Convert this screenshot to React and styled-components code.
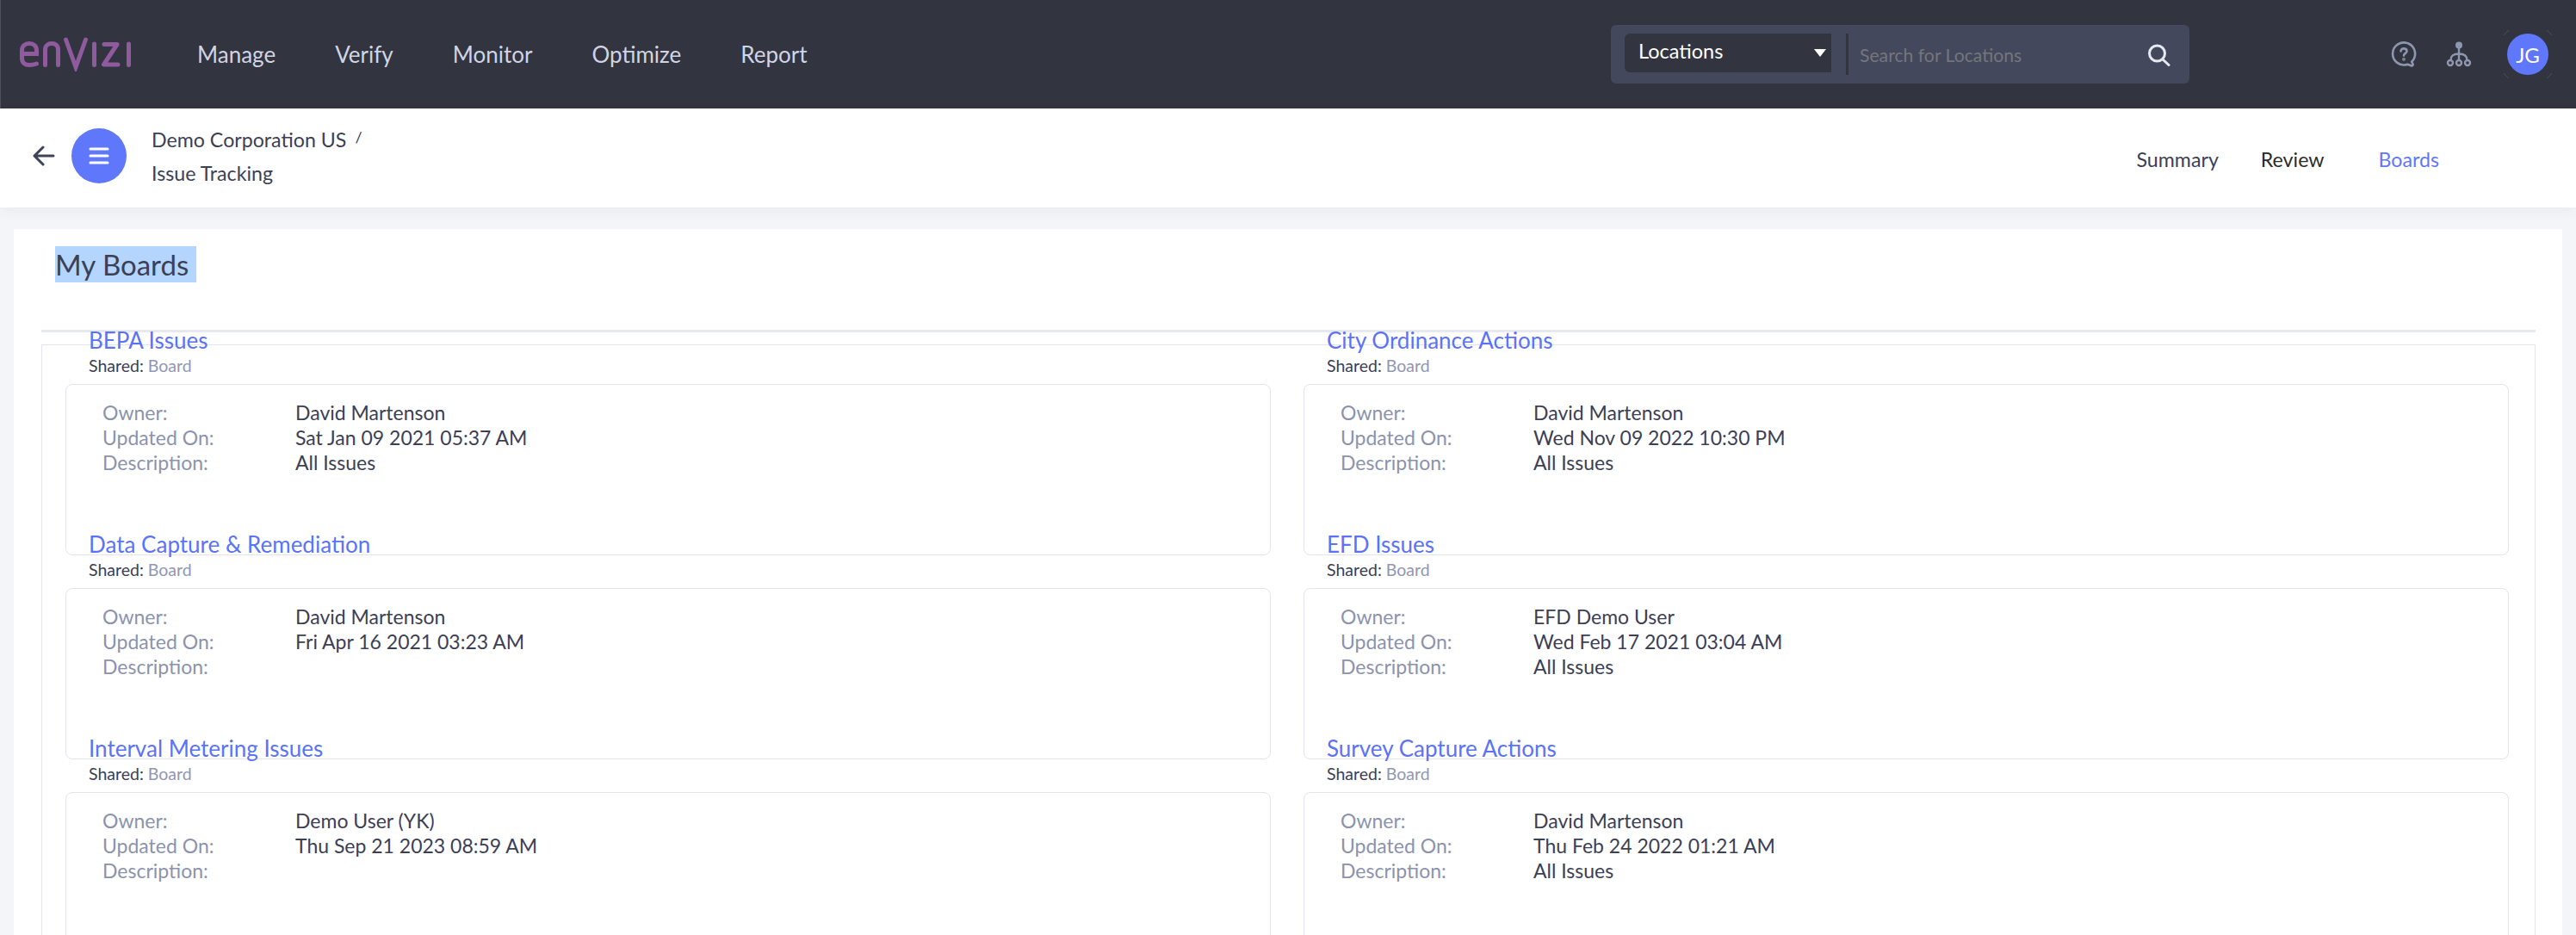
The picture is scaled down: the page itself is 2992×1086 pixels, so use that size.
import styled, { createGlobalStyle } from "styled-components";

const GlobalStyle = createGlobalStyle`
    html, body {
        margin: 0;
        padding: 0;
        height: 100%;
        background: #F4F5F8;
    }

    * {
        box-sizing: border-box;
    }
`;

const NAV_ITEMS = ["Manage", "Verify", "Monitor", "Optimize", "Report"];

const BOARDS = [
    { title: "BEPA Issues", owner: "David Martenson", updated: "Sat Jan 09 2021 05:37 AM", description: "All Issues" },
    { title: "City Ordinance Actions", owner: "David Martenson", updated: "Wed Nov 09 2022 10:30 PM", description: "All Issues" },
    { title: "Data Capture & Remediation", owner: "David Martenson", updated: "Fri Apr 16 2021 03:23 AM", description: "" },
    { title: "EFD Issues", owner: "EFD Demo User", updated: "Wed Feb 17 2021 03:04 AM", description: "All Issues" },
    { title: "Interval Metering Issues", owner: "Demo User (YK)", updated: "Thu Sep 21 2023 08:59 AM", description: "" },
    { title: "Survey Capture Actions", owner: "David Martenson", updated: "Thu Feb 24 2022 01:21 AM", description: "All Issues" },
];

function Logo() {
    return (
        <LogoSvg viewBox="0 0 129 40" fill="none" stroke="#8F5A9E" strokeWidth="5" strokeLinecap="round">
            <path d="M2.5 19.5H19.5V15.5C19.5 10.5 16 7.5 11 7.5C6 7.5 2.5 10.5 2.5 15.5V24.5C2.5 30 6 32.5 11 32.5C14 32.5 17 32 19.5 31" />
            <path d="M29.5 32.5V14.5C29.5 10 33 7.5 37 7.5C41.5 7.5 44.5 10 44.5 14.5V32.5" />
            <path d="M53.5 3L65 35L76.5 3" strokeLinejoin="miter" strokeMiterlimit="8" />
            <path d="M86.5 8V32.5" />
            <path d="M98 8.5H113L97.5 32H114" strokeLinejoin="round" />
            <path d="M126.5 8V32.5" />
        </LogoSvg>
    );
}

function HelpIcon() {
    return (
        <svg width="30" height="30" viewBox="0 0 30 30" fill="none" stroke="#8E97AE" strokeWidth="2.6" strokeLinecap="round" strokeLinejoin="round">
            <path d="M19.4 26.7A13 13 0 1 1 24.2 23.7L25.5 26.5C26 28 25 28.7 23.5 28.2Z" />
            <path d="M11.5 11.5C11.5 9.5 13 8.4 15 8.4C17 8.4 18.5 9.6 18.5 11.4C18.5 13.8 15 14 15 16.6" />
            <circle cx="15" cy="20.8" r="0.6" fill="#8E97AE" />
        </svg>
    );
}

function OrgIcon() {
    return (
        <svg width="30" height="30" viewBox="0 0 30 30" fill="none" stroke="#8E97AE" strokeWidth="2.4">
            <circle cx="15" cy="4.5" r="4" fill="#8E97AE" stroke="none" />
            <path d="M15 8V22M15 14.5C8 14.5 5.5 17 5.5 22M15 14.5C22 14.5 24.5 17 24.5 22" />
            <circle cx="5" cy="25" r="3" />
            <circle cx="15" cy="25" r="3" />
            <circle cx="25" cy="25" r="3" />
        </svg>
    );
}

function SearchIcon() {
    return (
        <SearchSvg viewBox="0 0 28 26" fill="none" stroke="#E6E8F2" strokeWidth="3" strokeLinecap="round">
            <circle cx="11.5" cy="11" r="9" />
            <path d="M18 18L25 24.5" />
        </SearchSvg>
    );
}

function BackArrow() {
    return (
        <BackSvg viewBox="0 0 26 24" fill="none" stroke="#3E435A" strokeWidth="3" strokeLinecap="round" strokeLinejoin="round">
            <path d="M24 12H2.5M12 2L2 12L12 22" />
        </BackSvg>
    );
}

function MenuIcon() {
    return (
        <svg width="24" height="20" viewBox="0 0 24 20" fill="none" stroke="#FFFFFF" strokeWidth="3" strokeLinecap="round">
            <path d="M2 2H22M2 10H22M2 18H22" />
        </svg>
    );
}

function AvatarTicks() {
    return (
        <TicksSvg viewBox="0 0 70 70" fill="none" stroke="#4C4F5E" strokeWidth="1">
            <path d="M7 13A35 35 0 0 1 13 7" />
            <path d="M57 7A35 35 0 0 1 63 13" />
            <path d="M63 57A35 35 0 0 1 57 63" />
            <path d="M13 63A35 35 0 0 1 7 57" />
        </TicksSvg>
    );
}

function BoardItem({ board }) {
    return (
        <Item>
            <ItemTitle>{board.title}</ItemTitle>
            <Shared>Shared: <span>Board</span></Shared>
            <Card>
                <Label>Owner:</Label>
                <Value>{board.owner}</Value>
                <Label>Updated On:</Label>
                <Value>{board.updated}</Value>
                <Label>Description:</Label>
                <Value>{board.description}</Value>
            </Card>
        </Item>
    );
}

export default function App() {
    return (
        <Page>
            <GlobalStyle />
            <TopBar>
                <Logo />
                <Nav>
                    {NAV_ITEMS.map((item) => <NavItem key={item}>{item}</NavItem>)}
                </Nav>
                <SearchBox>
                    <LocationSelect>
                        <span>Locations</span>
                        <Caret />
                    </LocationSelect>
                    <SearchDivider />
                    <Placeholder>Search for Locations</Placeholder>
                    <SearchIcon />
                </SearchBox>
                <TopIcons>
                    <HelpIcon />
                    <OrgIcon />
                    <Avatar>
                        JG
                        <AvatarTicks />
                    </Avatar>
                </TopIcons>
            </TopBar>
            <SubBar>
                <BackArrow />
                <MenuButton><MenuIcon /></MenuButton>
                <Breadcrumb>
                    <Crumb>Demo Corporation US<Slash>/</Slash></Crumb>
                    <Crumb>Issue Tracking</Crumb>
                </Breadcrumb>
                <Tabs>
                    <Tab>Summary</Tab>
                    <Tab $dark>Review</Tab>
                    <Tab $active>Boards</Tab>
                </Tabs>
            </SubBar>
            <Main>
                <Panel>
                    <Heading><Selected>My Boards&nbsp;</Selected></Heading>
                    <Divider />
                    <BoardsBox>
                        <BoardsGrid>
                            {BOARDS.map((board) => <BoardItem key={board.title} board={board} />)}
                        </BoardsGrid>
                    </BoardsBox>
                </Panel>
            </Main>
        </Page>
    );
}

const Page = styled.div`
    height: 1086px;
    overflow: hidden;
    font-family: Lato, "Noto Sans", sans-serif;
    color: #3C4056;
`;

const TopBar = styled.header`
    height: 126px;
    background: #32343F;
    border-left: 1px solid #50525C;
    padding-left: 22px;

    display: flex;
    align-items: center;
`;

const LogoSvg = styled.svg`
    width: 129px;
    height: 40px;
    margin-right: 77px;
`;

const Nav = styled.nav`
    width: 1642px;
    gap: 69px;

    display: flex;
    align-items: center;
`;

const NavItem = styled.div`
    font-size: 26px;
    line-height: 34px;
    color: #D0D4E4;
`;

const SearchBox = styled.div`
    width: 672px;
    height: 68px;
    padding: 10px 21px 0 16px;
    border-radius: 6px;
    background: #43485C;

    display: flex;
    align-items: flex-start;
`;

const LocationSelect = styled.div`
    width: 240px;
    height: 45px;
    padding: 0 6px 6px 16px;
    border-radius: 6px 0 0 6px;
    background: #32343F;

    font-size: 23.5px;
    color: #FFFFFF;

    display: flex;
    align-items: center;
    justify-content: space-between;
`;

const Caret = styled.span`
    width: 0;
    height: 0;
    margin-top: 6px;
    border-left: 7px solid transparent;
    border-right: 7px solid transparent;
    border-top: 9px solid #FFFFFF;
`;

const SearchDivider = styled.div`
    width: 3px;
    height: 48px;
    margin-left: 17px;
    background: #32343F;
`;

const Placeholder = styled.div`
    flex: 1;
    margin-left: 13px;
    padding-top: 11px;
    font-size: 21.2px;
    line-height: 28px;
    color: #75767B;
`;

const SearchSvg = styled.svg`
    width: 28px;
    height: 26px;
    margin-top: 12px;
`;

const TopIcons = styled.div`
    margin-left: 234px;
    gap: 34px;

    display: flex;
    align-items: center;
`;

const Avatar = styled.div`
    width: 48px;
    height: 48px;
    margin-left: 7px;
    border-radius: 50%;
    background: #5F78FB;

    font-size: 24px;
    color: #FFFFFF;

    position: relative;
    display: flex;
    align-items: center;
    justify-content: center;
`;

const TicksSvg = styled.svg`
    width: 70px;
    height: 70px;

    position: absolute;
    top: -11px;
    left: -11px;
`;

const SubBar = styled.div`
    height: 115px;
    padding: 0 159px 0 38px;
    background: #FFFFFF;
    box-shadow: 0 4px 14px rgba(60, 64, 86, 0.06);

    position: relative;
    display: flex;
    align-items: center;
`;

const BackSvg = styled.svg`
    width: 26px;
    height: 24px;
    margin: 0 19px 6px 0;
`;

const MenuButton = styled.div`
    width: 64px;
    height: 64px;
    margin-bottom: 6px;
    border-radius: 50%;
    background: #5F78FB;

    display: flex;
    align-items: center;
    justify-content: center;
`;

const Breadcrumb = styled.div`
    margin-left: 29px;
    margin-bottom: 8px;
    gap: 9px;

    display: flex;
    flex-direction: column;
`;

const Crumb = styled.div`
    font-size: 23.2px;
    line-height: 30px;
    color: #3C4056;
`;

const Slash = styled.span`
    margin-left: 10px;
    font-size: 18px;
    vertical-align: 5px;
`;

const Tabs = styled.div`
    margin-left: auto;
    margin-top: 2px;
    gap: 49px;

    display: flex;
    align-items: center;
`;

const Tab = styled.div`
    margin-left: ${({ $active }) => $active ? "14px" : "0"};
    font-size: 23.2px;
    line-height: 30px;
    color: ${({ $active, $dark }) => $active ? "#5F78FB" : $dark ? "#2B2B2B" : "#3C4056"};
`;

const Main = styled.main`
    padding: 25px 16px 0;
`;

const Panel = styled.section`
    height: 900px;
    padding: 20px 31px 0 32px;
    background: #FFFFFF;
`;

const Heading = styled.h1`
    margin: 0 0 55px 16px;
    font-size: 33px;
    font-weight: 400;
    line-height: 42px;
    color: #3C4056;
`;

const Selected = styled.span`
    display: inline-block;
    background: #B4D5FE;
`;

const Divider = styled.div`
    height: 3px;
    background: #E6E9F2;
`;

const BoardsBox = styled.div`
    height: 800px;
    margin-top: 14px;
    padding: 0 30px 0 27px;
    border: 1px solid #E3E4EF;
`;

const BoardsGrid = styled.div`
    margin-top: -21px;
    column-gap: 38px;

    display: grid;
    grid-template-columns: repeat(2, 1fr);
    grid-auto-rows: 237px;
`;

const Item = styled.article`
    min-width: 0;
`;

const ItemTitle = styled.div`
    padding-left: 27px;
    font-size: 26px;
    line-height: 30px;
    color: #5B73F8;
`;

const Shared = styled.div`
    margin-top: 3px;
    padding-left: 27px;
    font-size: 19.5px;
    line-height: 24px;
    color: #3C4056;

    span {
        color: #8F97B5;
    }
`;

const Card = styled.div`
    height: 199px;
    margin-top: 9px;
    padding: 17px 42px 0;
    border: 1px solid #E3E4EF;
    border-radius: 8px;

    display: grid;
    grid-template-columns: 224px 1fr;
    grid-auto-rows: 29px;
    align-items: center;
`;

const Label = styled.div`
    font-size: 23px;
    color: #8B93AE;
`;

const Value = styled.div`
    font-size: 23px;
    color: #3C4056;
`;
